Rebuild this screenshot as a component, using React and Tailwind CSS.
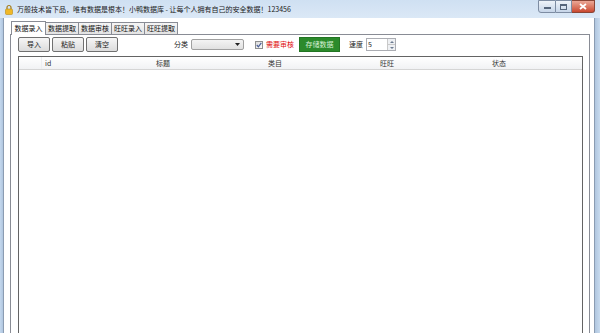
import React from "react";

const font = { fontFamily: '"Noto Sans CJK SC", "Noto Sans", sans-serif' };

const tabs = ["数据录入", "数据提取", "数据审核", "旺旺录入", "旺旺提取"];

const columns = [
  { label: "", width: "w-[23px]" },
  { label: "id", width: "w-[65px]", left: true },
  { label: "标题", width: "w-[112px]" },
  { label: "类目", width: "w-[112px]" },
  { label: "旺旺", width: "w-[112px]" },
  { label: "状态", width: "w-[112px]" },
];

const ToolButton = ({ children }) => (
  <button className="w-[32px] h-[15px] flex items-center justify-center border border-[#707070] rounded-[2px] bg-gradient-to-b from-[#f6f6f6] to-[#dcdcdc] text-[7px] text-[#222] leading-none">
    {children}
  </button>
);

const CaptionButtons = () => (
  <div className="flex self-start">
    <div className="w-[18px] h-[13px] border border-[#7d8ca2] rounded-bl-[3px] bg-gradient-to-b from-[#eef3f9] to-[#c6d5e8] flex items-end justify-center pb-[3px]">
      <div className="w-[7px] h-[2px] bg-[#55657b]" />
    </div>
    <div className="w-[16px] h-[13px] border-y border-r border-[#7d8ca2] bg-gradient-to-b from-[#eef3f9] to-[#c6d5e8] flex items-center justify-center">
      <div className="w-[7px] h-[6px] border border-[#55657b] border-t-2" />
    </div>
    <div className="w-[23px] h-[13px] border-y border-r border-[#8a4536] rounded-br-[3px] bg-gradient-to-b from-[#eaa796] to-[#c9472f] flex items-center justify-center">
      <svg width="8" height="7" viewBox="0 0 8 7">
        <path d="M1 1 L7 6 M7 1 L1 6" stroke="#fff" strokeWidth="1.8" />
      </svg>
    </div>
  </div>
);

export default function App() {
  return (
    <div className="w-[600px] h-[333px] overflow-hidden flex flex-col bg-gradient-to-b from-[#c7daef] to-[#d9e6f4]" style={font}>
      {/* Title bar */}
      <div className="h-[18px] shrink-0 flex items-start pl-[4px] pr-[5px] bg-gradient-to-b from-[#cfe0f2] to-[#dbe8f6]">
        <svg width="10" height="11" viewBox="0 0 10 11" className="mt-[4px]">
          <path d="M3 5 V3.5 A2 2 0 0 1 7 3.5 V5" stroke="#a27a1a" strokeWidth="1.2" fill="none" />
          <rect x="1.5" y="5" width="7" height="5.5" rx="1" fill="#f0b828" stroke="#b88b14" strokeWidth="0.6" />
        </svg>
        <span className="ml-[3px] mt-[4px] text-[7px] leading-[10px] text-[#1a1a1a] whitespace-nowrap">
          万般技术皆下品，唯有数据是根本！小鸭数据库 - 让每个人拥有自己的安全数据！123456
        </span>
        <div className="flex-1" />
        <CaptionButtons />
      </div>

      {/* Window body */}
      <div className="flex-1 flex min-h-0">
        <div className="w-[4px] shrink-0 bg-gradient-to-r from-[#c4d8ee] to-[#b0c6df] border-r border-[#8b9cb2]" />
        <div className="flex-1 bg-white flex flex-col pt-[3px] pl-[6px] pr-[4px] min-w-0">
          {/* Tab strip */}
          <div className="flex items-end h-[13px] pl-[1px] relative z-10">
            {tabs.map((t, i) =>
              i === 0 ? (
                <div key={t} className="h-[14px] -mb-[1px] w-[35px] border-x border-t border-[#898c95] bg-white flex items-center justify-center text-[7px] text-[#111]">
                  {t}
                </div>
              ) : (
                <div key={t} className="h-[12px] w-[34px] -ml-[1px] border border-[#898c95] border-b-0 bg-gradient-to-b from-[#f5f5f5] to-[#e3e3e3] flex items-center justify-center text-[7px] text-[#111]">
                  {t}
                </div>
              )
            )}
          </div>

          {/* Tab panel */}
          <div className="flex-1 border border-[#898c95] border-b-0 flex flex-col pl-[7px] pr-[6px] pt-[2px] min-h-0">
            <div className="h-[15px] flex items-center">
              <div className="flex gap-[2px]">
                <ToolButton>导入</ToolButton>
                <ToolButton>粘贴</ToolButton>
                <ToolButton>清空</ToolButton>
              </div>
              <span className="ml-[56px] text-[7px] text-[#222]">分类</span>
              <div className="ml-[3px] w-[53px] h-[11px] border border-[#a0a0a0] rounded-[2px] bg-gradient-to-b from-[#f4f4f4] to-[#e1e1e1] flex items-center justify-end pr-[3px]">
                <svg width="5" height="3" viewBox="0 0 5 3">
                  <path d="M0 0 H5 L2.5 3 Z" fill="#222" />
                </svg>
              </div>
              <div className="ml-[11px] w-[8px] h-[8px] border border-[#8e8f8f] bg-gradient-to-br from-[#dcdcdc] to-[#fbfbfb] flex items-center justify-center">
                <svg width="6" height="6" viewBox="0 0 6 6">
                  <path d="M0.8 3 L2.4 4.8 L5.3 0.9" stroke="#4a5f97" strokeWidth="1.2" fill="none" />
                </svg>
              </div>
              <span className="ml-[3px] text-[7px] text-[#e01010]">需要审核</span>
              <div className="ml-[5px] w-[41px] h-[15px] bg-[#2b8a2b] border border-[#237523] flex items-center justify-center text-[7px] text-[#d6f0d6]">
                存储数据
              </div>
              <span className="ml-[9px] text-[7px] text-[#222]">速度</span>
              <div className="ml-[3px] w-[30px] h-[13px] border border-[#abadb3] flex">
                <span className="flex-1 text-[7px] leading-[11px] pl-[1px] text-[#222]">5</span>
                <div className="w-[8px] flex flex-col border-l border-[#c9c9c9] bg-[#eef0f3]">
                  <div className="flex-1 flex items-center justify-center border-b border-[#c9c9c9]">
                    <svg width="4" height="2" viewBox="0 0 4 2"><path d="M0 2 H4 L2 0 Z" fill="#6b7a90" /></svg>
                  </div>
                  <div className="flex-1 flex items-center justify-center">
                    <svg width="4" height="2" viewBox="0 0 4 2"><path d="M0 0 H4 L2 2 Z" fill="#6b7a90" /></svg>
                  </div>
                </div>
              </div>
            </div>

            {/* List view */}
            <div className="mt-[4px] flex-1 border border-[#646464] border-b-0 bg-white min-h-0">
              <div className="h-[13px] flex bg-gradient-to-b from-white to-[#f1f2f4] border-b border-[#d5d5d5]">
                {columns.map((c, i) => (
                  <div
                    key={i}
                    className={`${c.width} h-full flex items-center text-[7px] text-[#333] ${i === 0 ? "border-r border-[#eceef1]" : ""} ${c.left ? "justify-start pl-[3px]" : "justify-center"}`}
                  >
                    {c.label}
                  </div>
                ))}
                <div className="flex-1" />
              </div>
            </div>
          </div>
        </div>
        <div className="w-[6px] shrink-0 bg-gradient-to-r from-[#b0c6df] to-[#c8dbef] border-l border-[#8b9cb2]" />
      </div>
    </div>
  );
}
